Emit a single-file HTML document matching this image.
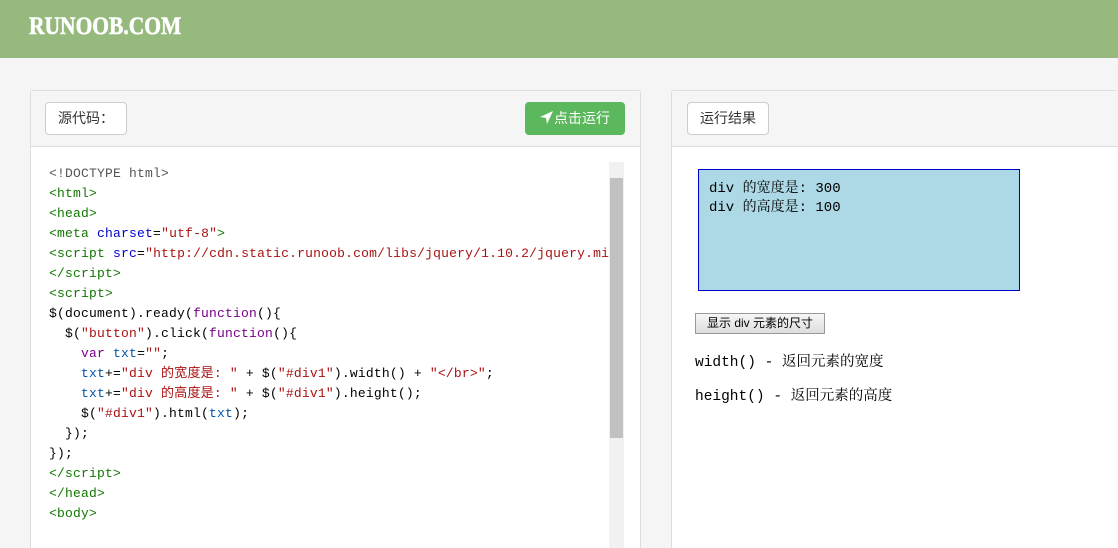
<!DOCTYPE html>
<html><head><meta charset="utf-8"><style>
*{margin:0;padding:0;box-sizing:border-box}
html,body{width:1118px;height:548px;overflow:hidden}
body{background:#f5f5f5;font-family:"Liberation Sans","Noto Sans CJK SC",sans-serif;position:relative}
.hd{position:absolute;left:0;top:0;width:1118px;height:58px;background:#96b97d}
.logo{position:absolute;left:29px;top:13px;color:#fff;font-family:"Liberation Serif","Noto Serif CJK SC",serif;font-weight:bold;font-size:25px;transform:scaleX(0.86);transform-origin:0 0;-webkit-text-stroke:0.6px #fff}
.panel{position:absolute;top:90px;border:1px solid #ddd;border-bottom:none;background:#fff;border-radius:3px 3px 0 0}
.ph{height:56px;background:#f5f5f5;border-bottom:1px solid #ddd;position:relative}
.btn{position:absolute;top:11px;height:33px;border:1px solid #ccc;border-radius:4px;background:#fff;font-size:14px;color:#333;line-height:31px;padding:0 12px}
.run{position:absolute;top:11px;right:15px;height:33px;width:100px;background:#5cb85c;border-radius:4px;color:#fff;font-size:14px;line-height:33px;text-align:center}
.code{position:absolute;left:49px;top:164px;width:560px;overflow:hidden;font-family:"Liberation Mono","Noto Sans CJK SC",monospace;font-size:13px;letter-spacing:0.2px;line-height:20px;white-space:pre;color:#000}
.t{color:#170}.a{color:#00c}.s{color:#a11}.k{color:#708}.v{color:#05a}.c{color:#555}
.sb{position:absolute;left:609px;top:162px;width:15px;height:386px;background:#f1f1f1}
.th{position:absolute;left:610px;top:178px;width:13px;height:260px;background:#c1c1c1}
.mono{font-family:"Liberation Mono","Noto Serif CJK SC",monospace}
</style></head><body>
<div class="hd"><div class="logo">RUNOOB.COM</div></div>
<div class="panel" style="left:30px;width:611px;height:458px">
<div class="ph"><div class="btn" style="left:14px">源代码：</div><div class="run"><svg width="14" height="13" viewBox="0 0 14 13" style="vertical-align:-1px"><path d="M13 0L0 6l6 1 1 6z" fill="#fff"/></svg>点击运行</div></div>
</div>
<div class="code"><span class="c">&lt;!DOCTYPE html&gt;</span>
<span class="t">&lt;html&gt;</span>
<span class="t">&lt;head&gt;</span>
<span class="t">&lt;meta</span> <span class="a">charset</span>=<span class="s">"utf-8"</span><span class="t">&gt;</span>
<span class="t">&lt;script</span> <span class="a">src</span>=<span class="s">"http://cdn.static.runoob.com/libs/jquery/1.10.2/jquery.min.js"</span>
<span class="t">&lt;/script&gt;</span>
<span class="t">&lt;script&gt;</span>
$(document).ready(<span class="k">function</span>(){
  $(<span class="s">"button"</span>).click(<span class="k">function</span>(){
    <span class="k">var</span> <span class="v">txt</span>=<span class="s">""</span>;
    <span class="v">txt</span>+=<span class="s">"div 的宽度是: "</span> + $(<span class="s">"#div1"</span>).width() + <span class="s">"&lt;/br&gt;"</span>;
    <span class="v">txt</span>+=<span class="s">"div 的高度是: "</span> + $(<span class="s">"#div1"</span>).height();
    $(<span class="s">"#div1"</span>).html(<span class="v">txt</span>);
  });
});
<span class="t">&lt;/script&gt;</span>
<span class="t">&lt;/head&gt;</span>
<span class="t">&lt;body&gt;</span></div>
<div class="sb"></div><div class="th"></div>
<div class="panel" style="left:671px;width:447px;height:458px;border-right:none">
<div class="ph"><div class="btn" style="left:15px">运行结果</div></div>
</div>
<div class="mono" style="position:absolute;left:698px;top:169px;width:322px;height:122px;background:#add8e6;border:1px solid #00c;padding:10px;font-size:14px;line-height:19px">div 的宽度是: 300<br>div 的高度是: 100</div>
<div style="position:absolute;left:695px;top:313px;width:130px;height:21px;border:1px solid #999;background:linear-gradient(#f6f6f6,#ddd);font-size:12px;line-height:19px;text-align:center;color:#000">显示 div 元素的尺寸</div>
<div class="mono" style="position:absolute;left:695px;top:350px;font-size:14.5px">width() - 返回元素的宽度</div>
<div class="mono" style="position:absolute;left:695px;top:384px;font-size:14.5px">height() - 返回元素的高度</div>
</body></html>
